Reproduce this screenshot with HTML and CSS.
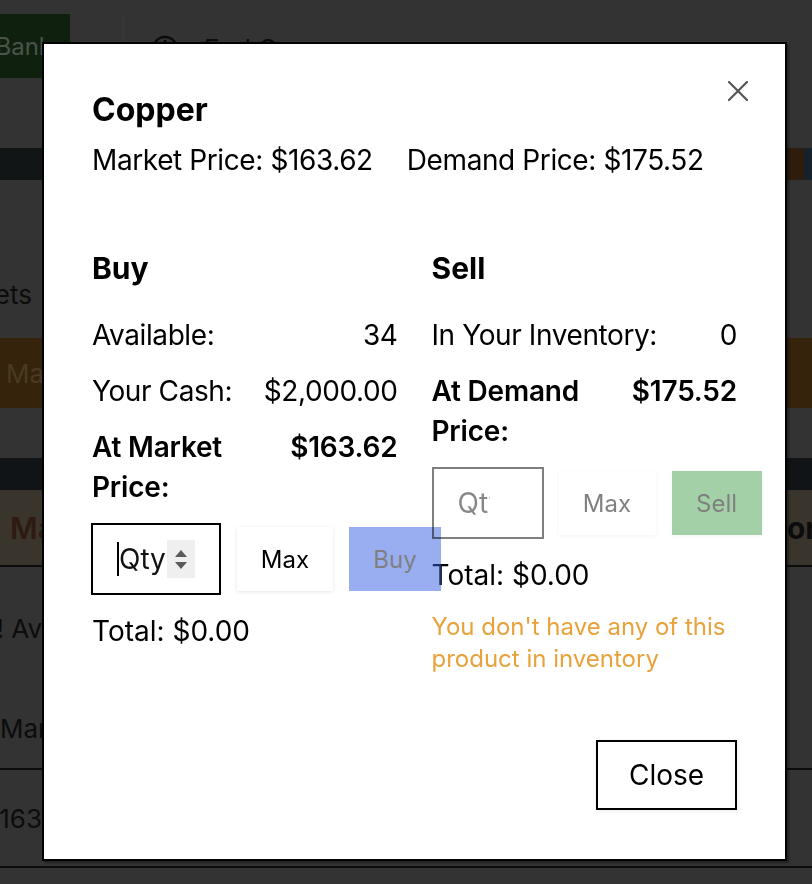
FILE: index.html
```html
<!DOCTYPE html>
<html lang="en">
<head>
<meta charset="utf-8">
<title>Copper</title>
<link rel="stylesheet" href="styles.css">
</head>
<body>
<div class="bg">
  <header class="bg-top">
    <div class="bank"><span>Bank</span></div>
    <div class="divider"></div>
    <div class="endgame">
      <svg class="power" width="30" height="30" viewBox="0 0 30 30"><circle cx="15" cy="15" r="12" fill="none" stroke="#0b0b0b" stroke-width="2.4"/><line x1="15" y1="6" x2="15" y2="15" stroke="#0b0b0b" stroke-width="2.4"/></svg>
      <span>End Game</span>
    </div>
  </header>
  <div class="band"><span class="pill"></span></div>
  <div class="bg-sec"><span class="clip">Markets</span></div>
  <div class="mapbar"><span class="lead">Map</span></div>
  <div class="gap"></div>
  <div class="band2"></div>
  <div class="brownrow"><span class="lead ma">Market</span><span class="on">on</span></div>
  <div class="txtrow r1"><span class="clip">Hi! Av</span></div>
  <div class="txtrow r2"><span class="lead flush">Mar</span></div>
  <div class="txtrow r3"><span class="clip">$163</span></div>
</div>

<div class="overlay">
  <div class="modal">
    <button class="x" aria-label="Close">
      <svg width="20" height="20" viewBox="0 0 20 20"><path d="M1 1 L19 19 M19 1 L1 19" stroke="#555" stroke-width="2.2" stroke-linecap="round" fill="none"/></svg>
    </button>
    <h2 class="title">Copper</h2>
    <div class="prices"><span>Market Price: $163.62</span><span>Demand Price: $175.52</span></div>

    <div class="cols">
      <section class="col">
        <h3 class="head">Buy</h3>
        <div class="row"><span>Available:</span><span class="val">34</span></div>
        <div class="row"><span>Your Cash:</span><span class="val">$2,000.00</span></div>
        <div class="row strong"><span>At Market Price:</span><span class="val">$163.62</span></div>
        <div class="trade">
          <div class="qty qty-buy"><span class="caret"></span><span class="ph">Qty</span><span class="spin"><i class="up"></i><i class="down"></i></span></div>
          <button class="btn max">Max</button>
          <button class="btn buy">Buy</button>
        </div>
        <div class="total">Total: $0.00</div>
      </section>

      <section class="col">
        <h3 class="head">Sell</h3>
        <div class="row"><span>In Your Inventory:</span><span class="val">0</span></div>
        <div class="row strong"><span>At Demand Price:</span><span class="val">$175.52</span></div>
        <div class="trade">
          <div class="qty qty-sell"><span class="ph">Qty</span><span class="spin hidden"></span></div>
          <button class="btn max2">Max</button>
          <button class="btn sell">Sell</button>
        </div>
        <div class="total">Total: $0.00</div>
        <p class="warn">You don't have any of this product in inventory</p>
      </section>
    </div>

    <div class="foot"><button class="close">Close</button></div>
  </div>
</div>
</body>
</html>
```

FILE: styles.css
```css
html, body {
  margin: 0;
  padding: 0;
}
body {
  background: #333333;
  font-family: Inter, "Noto Sans", sans-serif;
  width: 812px;
  height: 884px;
  overflow: hidden;
  color: #000;
}

/* ---------- dimmed background page ---------- */
.bg {
  width: 812px;
  color: #0c0c0c;
  font-size: 26px;
}
.bg-top {
  height: 148px;
  display: flex;
  align-items: flex-start;
}
.bank {
  margin-top: 14px;
  width: 70px;
  height: 64px;
  background: #10200f;
  display: flex;
  justify-content: flex-end;
  align-items: center;
  padding-right: 18px;
  box-sizing: border-box;
  overflow: hidden;
  color: #4a544a;
  font-size: 24px;
}
.divider {
  margin: 16px 0 0 52px;
  width: 2px;
  height: 70px;
  background: #383838;
}
.endgame {
  margin: 33px 0 0 26px;
  display: flex;
  align-items: center;
  gap: 24px;
  font-size: 26px;
  color: #0b0b0b;
}
.band {
  height: 32px;
  background: #111516;
  display: flex;
  justify-content: flex-end;
}
.pill {
  width: 24px;
  height: 32px;
  background: #2e1d0c;
  border-radius: 10px 0 0 10px;
  border-right: 8px solid #15222a;
}
.bg-sec {
  height: 158px;
  display: flex;
  align-items: flex-end;
  padding-bottom: 28px;
  box-sizing: border-box;
}
.clip {
  display: flex;
  justify-content: flex-end;
  width: 32px;
  white-space: nowrap;
}
.lead {
  padding-left: 6px;
  white-space: nowrap;
}
.lead.flush { padding-left: 0; }
.mapbar {
  height: 70px;
  background: #35230c;
  display: flex;
  align-items: center;
  color: #4a3a24;
}
.gap { height: 50px; }
.band2 {
  height: 32px;
  background: #101416;
}
.brownrow {
  height: 75px;
  background: #3a352c;
  border-bottom: 2px solid #0c0c0c;
  display: flex;
  justify-content: space-between;
  align-items: center;
  font-weight: 600;
  font-size: 30px;
}
.brownrow .ma { padding-left: 10px; color: #2e1a10; }
.brownrow .on { margin-right: -12px; color: #0c0c0c; font-weight: 700; }
.txtrow {
  display: flex;
  align-items: center;
}
.txtrow .clip { width: 42px; }
.txtrow.r1 { height: 122px; }
.txtrow.r2 {
  height: 79px;
  border-bottom: 2px solid #0c0c0c;
}
.txtrow.r3 {
  height: 96px;
  border-bottom: 2px solid #0c0c0c;
}

/* ---------- modal ---------- */
.overlay {
  position: fixed;
  inset: 0;
}
.modal {
  position: relative;
  box-sizing: border-box;
  width: 745px;
  margin: 42px 0 0 42px;
  background: #fff;
  border: 2px solid #000;
  padding: 48px 48px 49px;
  box-shadow: 2px 2px 2px rgba(0, 0, 0, 0.35);
}
.x {
  position: absolute;
  top: 37px;
  right: 37px;
  width: 20px;
  height: 20px;
  padding: 0;
  border: 0;
  background: none;
  display: flex;
}
.title {
  margin: 0 0 12px;
  font-size: 32px;
  line-height: 36px;
  font-weight: 700;
}
.prices {
  display: flex;
  gap: 34px;
  font-size: 28px;
  line-height: 40px;
  letter-spacing: -0.4px;
}
.cols {
  display: grid;
  grid-template-columns: minmax(0, 1fr) minmax(0, 1fr);
  column-gap: 34px;
  margin-top: 68px;
}
.head {
  margin: 0 0 27px;
  font-size: 30px;
  line-height: 40px;
  font-weight: 700;
}
.row {
  display: flex;
  justify-content: space-between;
  gap: 12px;
  font-size: 28px;
  line-height: 40px;
  margin-bottom: 16px;
  letter-spacing: -0.4px;
}
.row .val { white-space: nowrap; }
.row.strong { font-weight: 600; letter-spacing: -0.2px; }

.trade {
  display: flex;
  align-items: center;
  gap: 16px;
}
.qty {
  flex-shrink: 0;
  box-sizing: border-box;
  height: 72px;
  border: 2px solid #000;
  padding: 0 24px;
  display: flex;
  align-items: center;
}
.qty-buy { width: 130px; margin-left: -1px; }
.qty-sell { width: 112px; opacity: 0.5; }
.caret {
  flex-shrink: 0;
  width: 2px;
  height: 34px;
  background: #000;
}
.ph {
  flex: 1;
  min-width: 0;
  overflow: hidden;
  white-space: nowrap;
  font-size: 28px;
  color: #111;
}
.spin {
  flex-shrink: 0;
  width: 28px;
  height: 38px;
  background: #efefef;
  display: flex;
  flex-direction: column;
  align-items: center;
  justify-content: center;
  gap: 5px;
}
.spin.hidden { background: transparent; }
.up, .down {
  display: block;
  width: 0;
  height: 0;
  border-left: 6px solid transparent;
  border-right: 6px solid transparent;
}
.up { border-bottom: 7px solid #5a5a5a; }
.down { border-top: 7px solid #5a5a5a; }

.btn {
  flex-shrink: 0;
  height: 64px;
  border: 0;
  padding: 0;
  font-family: Inter, "Noto Sans", sans-serif;
  font-size: 24px;
  color: #000;
  background: #fff;
  box-shadow: 0 1px 4px rgba(0, 0, 0, 0.1);
}
.max { width: 96px; }
.max2 { width: 97px; opacity: 0.5; margin-left: -1px; }
.buy {
  width: 92px;
  background: #335fe1;
  opacity: 0.5;
  box-shadow: none;
}
.sell {
  width: 90px;
  background: #4ba153;
  opacity: 0.5;
}
.total {
  margin-top: 16px;
  font-size: 28px;
  line-height: 40px;
}
.warn {
  margin: 16px 0 0;
  color: #e9a23b;
  font-size: 24px;
  line-height: 32px;
}
.foot {
  display: flex;
  justify-content: flex-end;
  margin-top: 65px;
}
.close {
  box-sizing: border-box;
  width: 141px;
  height: 70px;
  border: 2px solid #000;
  background: #fff;
  font-family: Inter, "Noto Sans", sans-serif;
  font-size: 28px;
  color: #000;
  box-shadow: 0 1px 4px rgba(0, 0, 0, 0.08);
}
```
